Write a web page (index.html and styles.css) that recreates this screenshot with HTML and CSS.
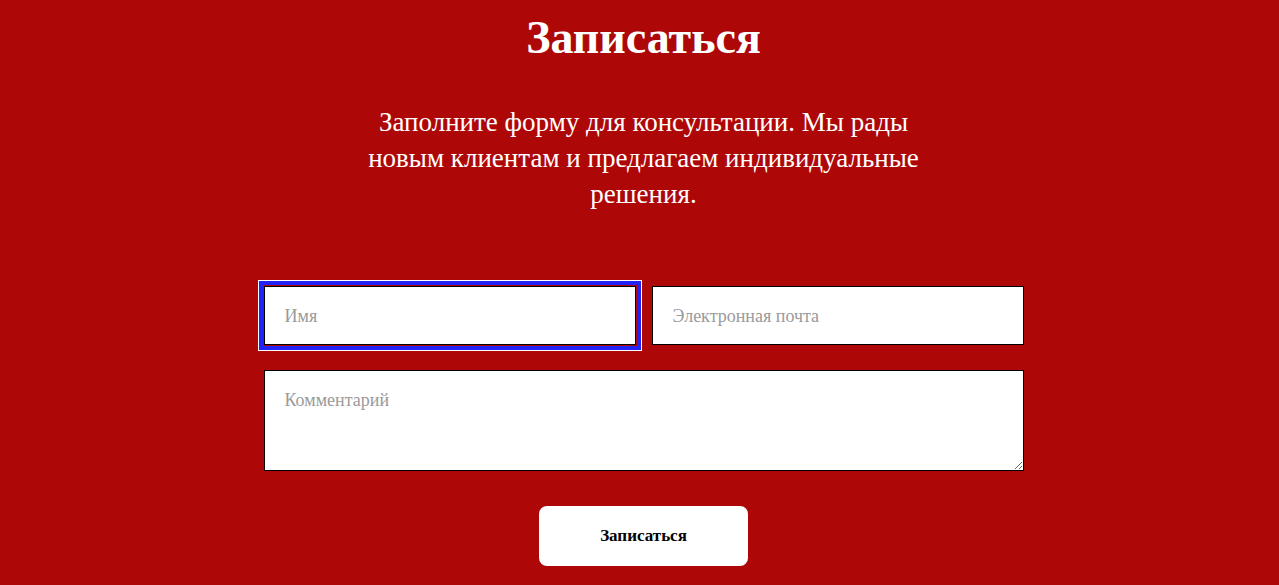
FILE: index.html
```html
<!DOCTYPE html>
<html lang="ru">
<head>
    <meta charset="UTF-8">
    <meta name="viewport" content="width=device-width, initial-scale=1.0">
    <title>Записаться</title>
    <link rel="stylesheet" href="styles.css">
</head>
<body>

    <section class="signup">
        <h1 class="signup-title">Записаться</h1>
        <p class="signup-text">Заполните форму для консультации. Мы рады новым клиентам и предлагаем индивидуальные решения.</p>

        <form class="signup-form">
            <div class="form-row">
                <input type="text" name="name" class="field field-active" placeholder="Имя">
                <input type="email" name="email" class="field" placeholder="Электронная почта">
            </div>
            <textarea name="comment" class="field field-comment" placeholder="Комментарий"></textarea>
            <button type="submit" class="submit-button">Записаться</button>
        </form>
    </section>

</body>
</html>
```

FILE: styles.css
```css
body {
    margin: 0;
    background-color: #ae0707;
    font-family: "Liberation Serif", "DejaVu Serif", serif;
}
.signup {
    display: flex;
    flex-direction: column;
    align-items: center;
    padding: 0 0 0 8px;
    color: #fff;
}
.signup-title {
    margin: 10px 0 0;
    font-size: 46px;
    font-weight: 700;
    line-height: 56px;
}
.signup-text {
    width: 560px;
    margin: 38px 0 0;
    font-size: 27px;
    line-height: 36px;
    text-align: center;
}
.signup-form {
    width: 760px;
    margin-top: 74px;
    display: flex;
    flex-direction: column;
    align-items: center;
}
.form-row {
    width: 100%;
    display: flex;
    gap: 16px;
}
.field {
    box-sizing: border-box;
    width: 100%;
    height: 59px;
    padding: 2px 20px 0;
    border: 1px solid #000;
    border-radius: 0;
    background: #fff;
    font-family: inherit;
    font-size: 18px;
    color: #222;
}
.field::placeholder {
    color: #9a9a9a;
}
.field-active {
    outline: none;
    box-shadow: 0 0 0 1px #ae0707, 0 0 0 5px #2323f5, 0 0 0 6px #fff;
}
.field-comment {
    height: 101px;
    margin-top: 25px;
    padding-top: 19px;
    resize: vertical;
}
.submit-button {
    width: 209px;
    height: 60px;
    margin-top: 35px;
    border: none;
    border-radius: 8px;
    background: #fff;
    color: #000;
    font-family: inherit;
    font-size: 17px;
    font-weight: 700;
    cursor: pointer;
}
```
